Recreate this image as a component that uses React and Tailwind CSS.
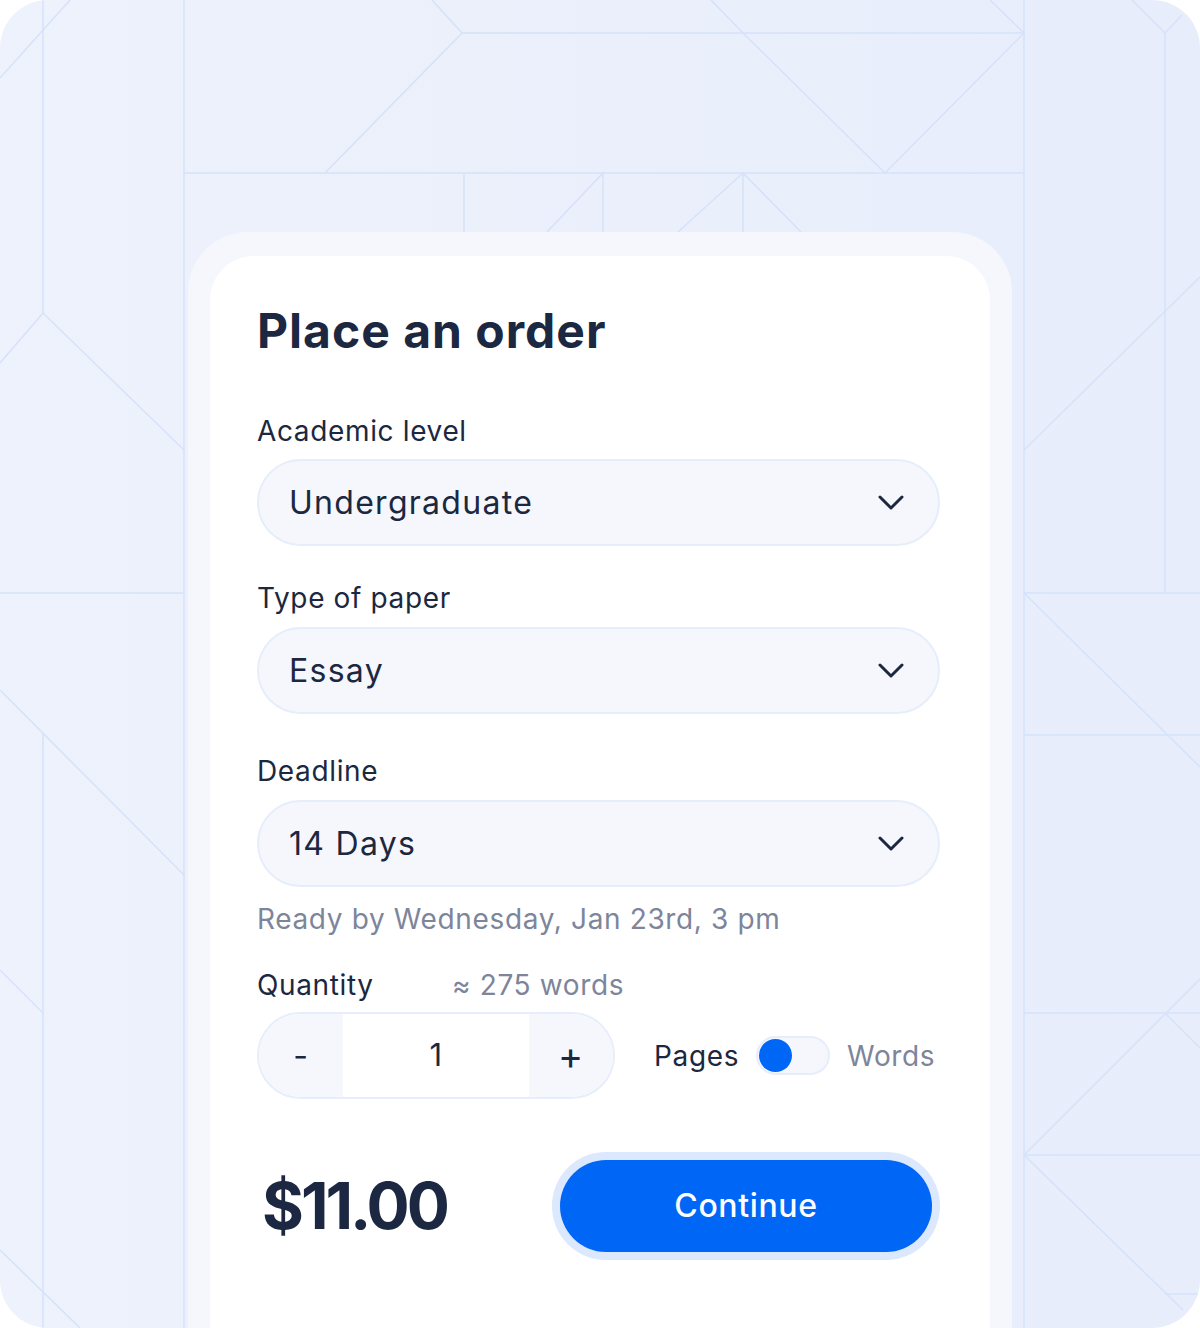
import { useState } from 'react'

const lines = [
  'M70 0 L0 78',
  'M43 0 L43 313',
  'M0 363 L43 313 L184 450',
  'M0 593 L184 593',
  'M0 690 L184 875',
  'M43 733 L43 1328',
  'M0 970 L43 1013',
  'M0 1250 L80 1328',
  'M184 0 L184 1328',
  'M432 0 L462 33 L325 173',
  'M462 33 L1024 33',
  'M184 173 L1024 173',
  'M711 0 L743 33 L885 173 L1024 33 L990 0',
  'M464 173 L464 232',
  'M547 232 L603 173 L603 232',
  'M678 232 L743 173 L801 232',
  'M743 173 L743 232',
  'M1024 0 L1024 1328',
  'M1132 0 L1165 33 L1182 15',
  'M1165 33 L1165 593',
  'M1200 277 L1024 450',
  'M1024 593 L1200 593',
  'M1024 593 L1200 767',
  'M1024 735 L1200 735',
  'M1024 1013 L1200 1013',
  'M1165 1013 L1200 1048',
  'M1200 979 L1024 1155',
  'M1024 1155 L1200 1155',
  'M1024 1155 L1183 1310',
  'M1165 1294 L1200 1294',
]

function Chevron() {
  return (
    <svg width="26" height="16" viewBox="0 0 26 16" fill="none">
      <path d="M2 2 L13 13 L24 2" stroke="#1b2840" strokeWidth="3" strokeLinecap="round" strokeLinejoin="round" />
    </svg>
  )
}

function Select({ value }) {
  return (
    <div className="flex h-[87px] items-center justify-between rounded-full border-2 border-[#e6edfb] bg-[#f5f7fd] pl-[30px] pr-[34px]">
      <span className="text-[32px] tracking-[0.04em] text-[#1b2840]">{value}</span>
      <Chevron />
    </div>
  )
}

export default function App() {
  const [qty, setQty] = useState(1)
  const [words, setWords] = useState(false)

  return (
    <div className="bg-white" style={{ fontFamily: 'Inter, "Noto Sans", sans-serif' }}>
      <div className="relative h-[1328px] overflow-hidden rounded-[48px] bg-gradient-to-r from-[#eef2fc] to-[#e7edfb]">
        <svg className="absolute inset-0" width="1200" height="1328" viewBox="0 0 1200 1328" fill="none">
          {lines.map((d, i) => (
            <path key={i} d={d} stroke="#d5e2fa" strokeWidth="1.5" />
          ))}
        </svg>

        <div className="relative mx-[188px] mt-[232px] rounded-t-[60px] bg-[#f5f7fd] px-[22px] pt-[24px]">
          <div className="h-[1200px] rounded-t-[44px] bg-white pl-[47px] pr-[50px] pt-[47px] tracking-[0.04em] text-[#1b2840]">
            <h1 className="text-[48px] font-bold leading-[56px] tracking-[1px] text-[#1c2841]">Place an order</h1>

            <div className="mt-[54px] text-[28px] leading-[36px]">Academic level</div>
            <div className="mt-[10px]">
              <Select value="Undergraduate" />
            </div>

            <div className="mt-[34px] text-[28px] leading-[36px]">Type of paper</div>
            <div className="mt-[11px]">
              <Select value="Essay" />
            </div>

            <div className="mt-[39px] text-[28px] leading-[36px]">Deadline</div>
            <div className="mt-[11px]">
              <Select value="14 Days" />
            </div>

            <div className="mt-[14px] text-[28px] leading-[36px] text-[#7d859b]">Ready by Wednesday, Jan 23rd, 3 pm</div>

            <div className="mt-[30px] flex text-[28px] leading-[36px]">
              <span className="w-[195px]">Quantity</span>
              <span className="text-[#7d859b]">≈ {qty * 275} words</span>
            </div>

            <div className="mt-[9px] flex items-center">
              <div className="flex h-[87px] w-[358px] overflow-hidden rounded-full border-2 border-[#e6edfb]">
                <button onClick={() => setQty(q => Math.max(1, q - 1))} className="flex w-[84px] items-center justify-center bg-[#f5f7fd] text-[32px]">-</button>
                <div className="flex flex-1 items-center justify-center bg-white text-[31px]">{qty}</div>
                <button onClick={() => setQty(q => q + 1)} className="flex w-[84px] items-center justify-center bg-[#f5f7fd] text-[38px]">+</button>
              </div>
              <span className="ml-[39px] text-[28px]">Pages</span>
              <button
                onClick={() => setWords(w => !w)}
                className={`ml-[17px] flex h-[39px] w-[74px] items-center rounded-full border-2 border-[#e6edfb] bg-[#f5f7fd] px-[1px] ${words ? 'justify-end' : 'justify-start'}`}
              >
                <span className="h-[33px] w-[33px] rounded-full bg-[#0066f5]" />
              </button>
              <span className="ml-[17px] text-[28px] text-[#7d859b]">Words</span>
            </div>

            <div className="mt-[53px] flex items-center justify-between">
              <span className="ml-[5px] text-[64px] font-bold leading-none tracking-[-3px] text-[#1c2841]">$11.00</span>
              <div className="rounded-full bg-[#dbe8fd] p-[8px]">
                <button className="h-[92px] w-[372px] rounded-full bg-[#0066f5] text-[32px] font-medium text-white">Continue</button>
              </div>
            </div>
          </div>
        </div>
      </div>
    </div>
  )
}
